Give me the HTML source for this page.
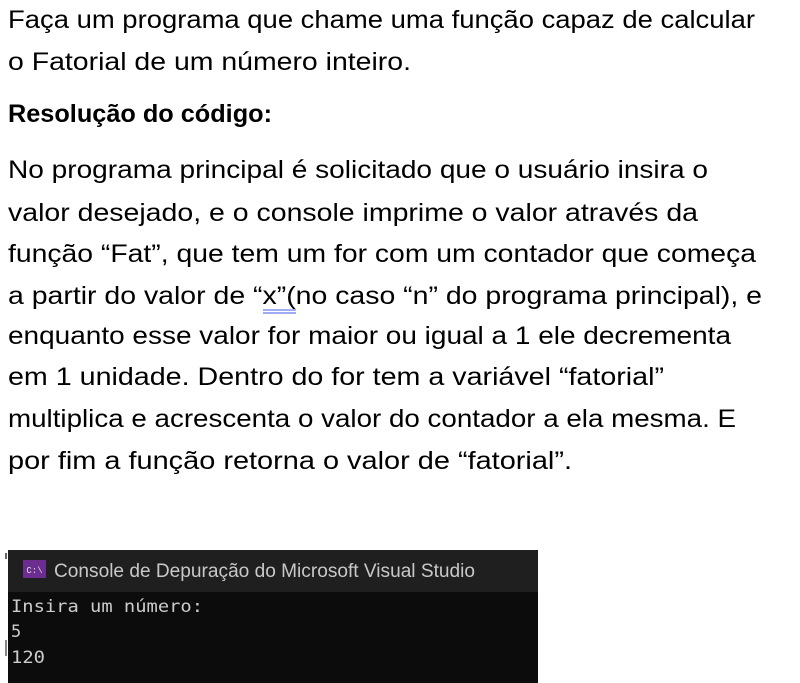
<!DOCTYPE html>
<html><head><meta charset="utf-8"><style>
html,body{margin:0;padding:0;background:#fff;width:800px;height:683px;overflow:hidden}
svg{display:block}
</style></head><body>
<svg width="800" height="683" xmlns="http://www.w3.org/2000/svg" font-family="Liberation Sans, sans-serif">
<g font-size="25" fill="#000">
<text x="8" y="28" textLength="747" lengthAdjust="spacingAndGlyphs">Faça um programa que chame uma função capaz de calcular</text>
<text x="8" y="70" textLength="403" lengthAdjust="spacingAndGlyphs">o Fatorial de um número inteiro.</text>
<text x="8" y="122" textLength="264" lengthAdjust="spacingAndGlyphs" font-weight="bold">Resolução do código:</text>
<text x="8" y="178" textLength="700" lengthAdjust="spacingAndGlyphs">No programa principal é solicitado que o usuário insira o</text>
<text x="8" y="221" textLength="690" lengthAdjust="spacingAndGlyphs">valor desejado, e o console imprime o valor através da</text>
<text x="8" y="262" textLength="748" lengthAdjust="spacingAndGlyphs">função “Fat”, que tem um for com um contador que começa</text>
<text x="8" y="304" textLength="754" lengthAdjust="spacingAndGlyphs">a partir do valor de “x”(no caso “n” do programa principal), e</text>
<text x="8" y="344" textLength="723" lengthAdjust="spacingAndGlyphs">enquanto esse valor for maior ou igual a 1 ele decrementa</text>
<text x="8" y="385" textLength="656" lengthAdjust="spacingAndGlyphs">em 1 unidade. Dentro do for tem a variável “fatorial”</text>
<text x="8" y="427" textLength="728" lengthAdjust="spacingAndGlyphs">multiplica e acrescenta o valor do contador a ela mesma. E</text>
<text x="8" y="469" textLength="564" lengthAdjust="spacingAndGlyphs">por fim a função retorna o valor de “fatorial”.</text>
</g>
<line x1="263" y1="310" x2="296" y2="310" stroke="#8090f0" stroke-width="1.5"/>
<line x1="263" y1="313" x2="296" y2="313" stroke="#8090f0" stroke-width="1.5"/>
<rect x="8" y="550" width="530" height="133" fill="#0c0c0c"/>
<rect x="8" y="550" width="530" height="42" fill="#1f1f1f"/>
<rect x="5" y="553" width="2" height="6" fill="#666"/>
<rect x="5" y="640" width="2" height="16" fill="#888"/>
<rect x="23" y="560" width="23" height="18" fill="#6b2d8f"/>
<text x="34.5" y="573" font-size="9" fill="#ddd" text-anchor="middle" font-family="Liberation Mono, monospace">C:\</text>
<text x="54" y="577" font-size="19" fill="#c8c8c8" textLength="421" lengthAdjust="spacingAndGlyphs">Console de Depuração do Microsoft Visual Studio</text>
<g font-family="DejaVu Sans Mono, Liberation Mono, monospace" font-size="17" fill="#cccccc">
<text x="11" y="612" textLength="192" lengthAdjust="spacingAndGlyphs">Insira um número:</text>
<text x="11" y="637">5</text>
<text x="11" y="663" textLength="34" lengthAdjust="spacingAndGlyphs">120</text>
</g>
</svg>
</body></html>
